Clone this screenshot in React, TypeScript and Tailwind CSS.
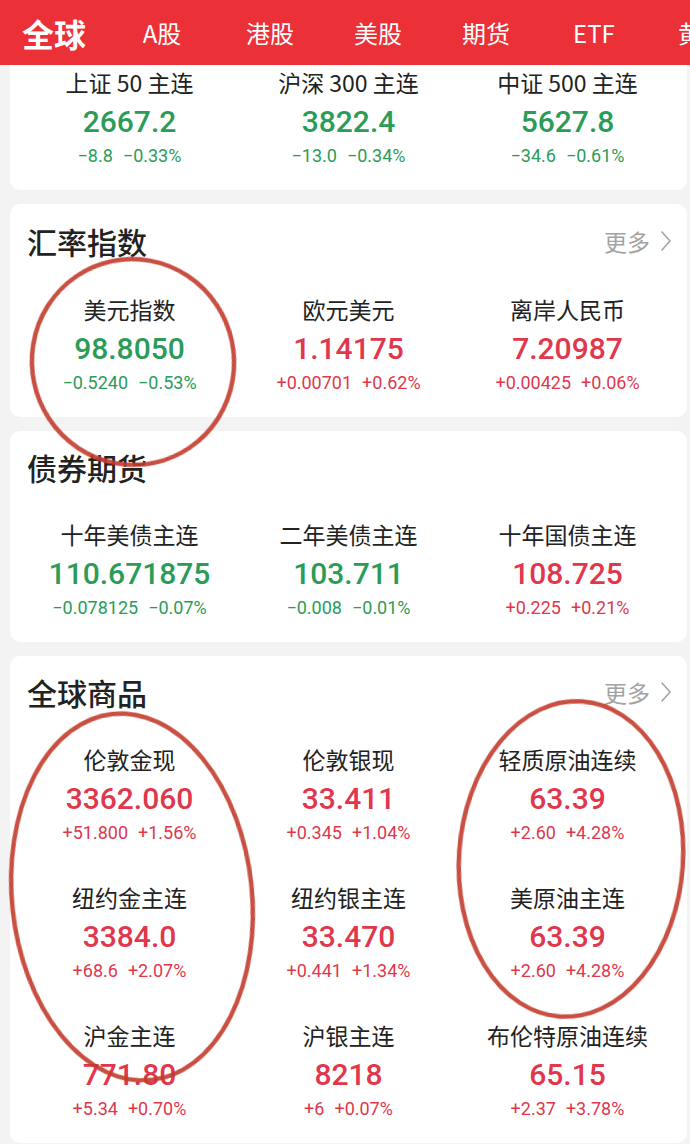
import React from 'react';

type Quote = {
  name: string;
  value: string;
  change: string;
  pct: string;
  up: boolean;
};

const tabs = ['A股', '港股', '美股', '期货', 'ETF', '黄金'];

const indexFutures: Quote[] = [
  { name: '上证 50 主连', value: '2667.2', change: '-8.8', pct: '-0.33%', up: false },
  { name: '沪深 300 主连', value: '3822.4', change: '-13.0', pct: '-0.34%', up: false },
  { name: '中证 500 主连', value: '5627.8', change: '-34.6', pct: '-0.61%', up: false },
];

const fx: Quote[] = [
  { name: '美元指数', value: '98.8050', change: '-0.5240', pct: '-0.53%', up: false },
  { name: '欧元美元', value: '1.14175', change: '+0.00701', pct: '+0.62%', up: true },
  { name: '离岸人民币', value: '7.20987', change: '+0.00425', pct: '+0.06%', up: true },
];

const bonds: Quote[] = [
  { name: '十年美债主连', value: '110.671875', change: '-0.078125', pct: '-0.07%', up: false },
  { name: '二年美债主连', value: '103.711', change: '-0.008', pct: '-0.01%', up: false },
  { name: '十年国债主连', value: '108.725', change: '+0.225', pct: '+0.21%', up: true },
];

const commodities: Quote[] = [
  { name: '伦敦金现', value: '3362.060', change: '+51.800', pct: '+1.56%', up: true },
  { name: '伦敦银现', value: '33.411', change: '+0.345', pct: '+1.04%', up: true },
  { name: '轻质原油连续', value: '63.39', change: '+2.60', pct: '+4.28%', up: true },
  { name: '纽约金主连', value: '3384.0', change: '+68.6', pct: '+2.07%', up: true },
  { name: '纽约银主连', value: '33.470', change: '+0.441', pct: '+1.34%', up: true },
  { name: '美原油主连', value: '63.39', change: '+2.60', pct: '+4.28%', up: true },
  { name: '沪金主连', value: '771.80', change: '+5.34', pct: '+0.70%', up: true },
  { name: '沪银主连', value: '8218', change: '+6', pct: '+0.07%', up: true },
  { name: '布伦特原油连续', value: '65.15', change: '+2.37', pct: '+3.78%', up: true },
];

const cjk = "font-['Noto_Sans_CJK_SC',sans-serif]";
const num = "font-['Roboto','Noto_Sans_CJK_SC',sans-serif]";

const QuoteCell = ({ q }: { q: Quote }) => {
  const color = q.up ? 'text-[#e0374c]' : 'text-[#2b9c58]';
  return (
    <div className="flex flex-col items-center">
      <div className={`h-[30px] text-[23px] leading-[30px] text-[#222] ${cjk}`}>{q.name}</div>
      <div className={`mt-[5px] h-[40px] text-[30px] leading-[40px] font-medium ${color} ${num}`}>
        {q.value}
      </div>
      <div className={`mt-[2px] flex h-[24px] gap-[10px] text-[18px] leading-[24px] ${color} ${num}`}>
        <span>{q.change.replace('-', '\u2212')}</span>
        <span>{q.pct.replace('-', '\u2212')}</span>
      </div>
    </div>
  );
};

const SectionTitle = ({ title, more }: { title: string; more?: boolean }) => (
  <div className="flex h-[40px] items-center justify-between pr-[15px] pl-[17px]">
    <span className={`text-[30px] leading-[40px] font-medium text-[#222] ${cjk}`}>{title}</span>
    {more && (
      <span className={`flex items-center gap-[10px] text-[23px] text-[#a3a3a3] ${cjk}`}>
        更多
        <svg width="12" height="22" viewBox="0 0 12 22" fill="none">
          <path d="M2 2l8 9-8 9" stroke="#a3a3a3" strokeWidth="1.6" strokeLinecap="round" strokeLinejoin="round" />
        </svg>
      </span>
    )}
  </div>
);

const Grid = ({ items, rowGap }: { items: Quote[]; rowGap?: boolean }) => (
  <div className={`grid grid-cols-3 px-[10px] ${rowGap ? 'gap-y-[37px]' : ''}`}>
    {items.map((q) => (
      <QuoteCell key={q.name} q={q} />
    ))}
  </div>
);

const App = () => {
  return (
    <div className="relative h-[1144px] w-[690px] overflow-hidden bg-[#f3f3f3]">
      {/* TOP TABS */}
      <div className="flex h-[65px] items-center overflow-hidden bg-[#ec3038] pl-[22px] whitespace-nowrap text-white">
        <span className={`w-[64px] shrink-0 text-[32px] font-bold ${cjk}`}>全球</span>
        <div className={`ml-[22px] flex text-[24px] ${cjk}`}>
          {tabs.map((t) => (
            <span key={t} className="w-[108px] shrink-0 text-center">
              {t}
            </span>
          ))}
        </div>
      </div>

      <div className="flex flex-col gap-[14px] pr-[3px] pl-[10px]">
        {/* INDEX FUTURES (scrolled) */}
        <div className="rounded-b-[10px] bg-white pt-[2px] pb-[22px]">
          <Grid items={indexFutures} />
        </div>

        {/* FX */}
        <div className="rounded-[10px] bg-white pt-[17px] pb-[22px]">
          <SectionTitle title="汇率指数" more />
          <div className="mt-[33px]">
            <Grid items={fx} />
          </div>
        </div>

        {/* BONDS */}
        <div className="rounded-[10px] bg-white pt-[16px] pb-[22px]">
          <SectionTitle title="债券期货" />
          <div className="mt-[32px]">
            <Grid items={bonds} />
          </div>
        </div>

        {/* COMMODITIES */}
        <div className="rounded-[10px] bg-white pt-[16px] pb-[22px]">
          <SectionTitle title="全球商品" more />
          <div className="mt-[32px]">
            <Grid items={commodities} rowGap />
          </div>
        </div>
      </div>

      {/* hand-drawn marks */}
      <svg className="pointer-events-none absolute top-0 left-0" width="690" height="1144" fill="none">
        <g stroke="#c23c2c" strokeWidth="4.5" opacity="0.9">
          <ellipse cx="133" cy="362" rx="101" ry="103" transform="rotate(-12 133 362)" />
          <ellipse cx="132" cy="897" rx="120" ry="184" transform="rotate(-6 132 897)" />
          <ellipse cx="571" cy="859" rx="112" ry="158" transform="rotate(4 571 859)" />
        </g>
      </svg>
    </div>
  );
};

export default App;
